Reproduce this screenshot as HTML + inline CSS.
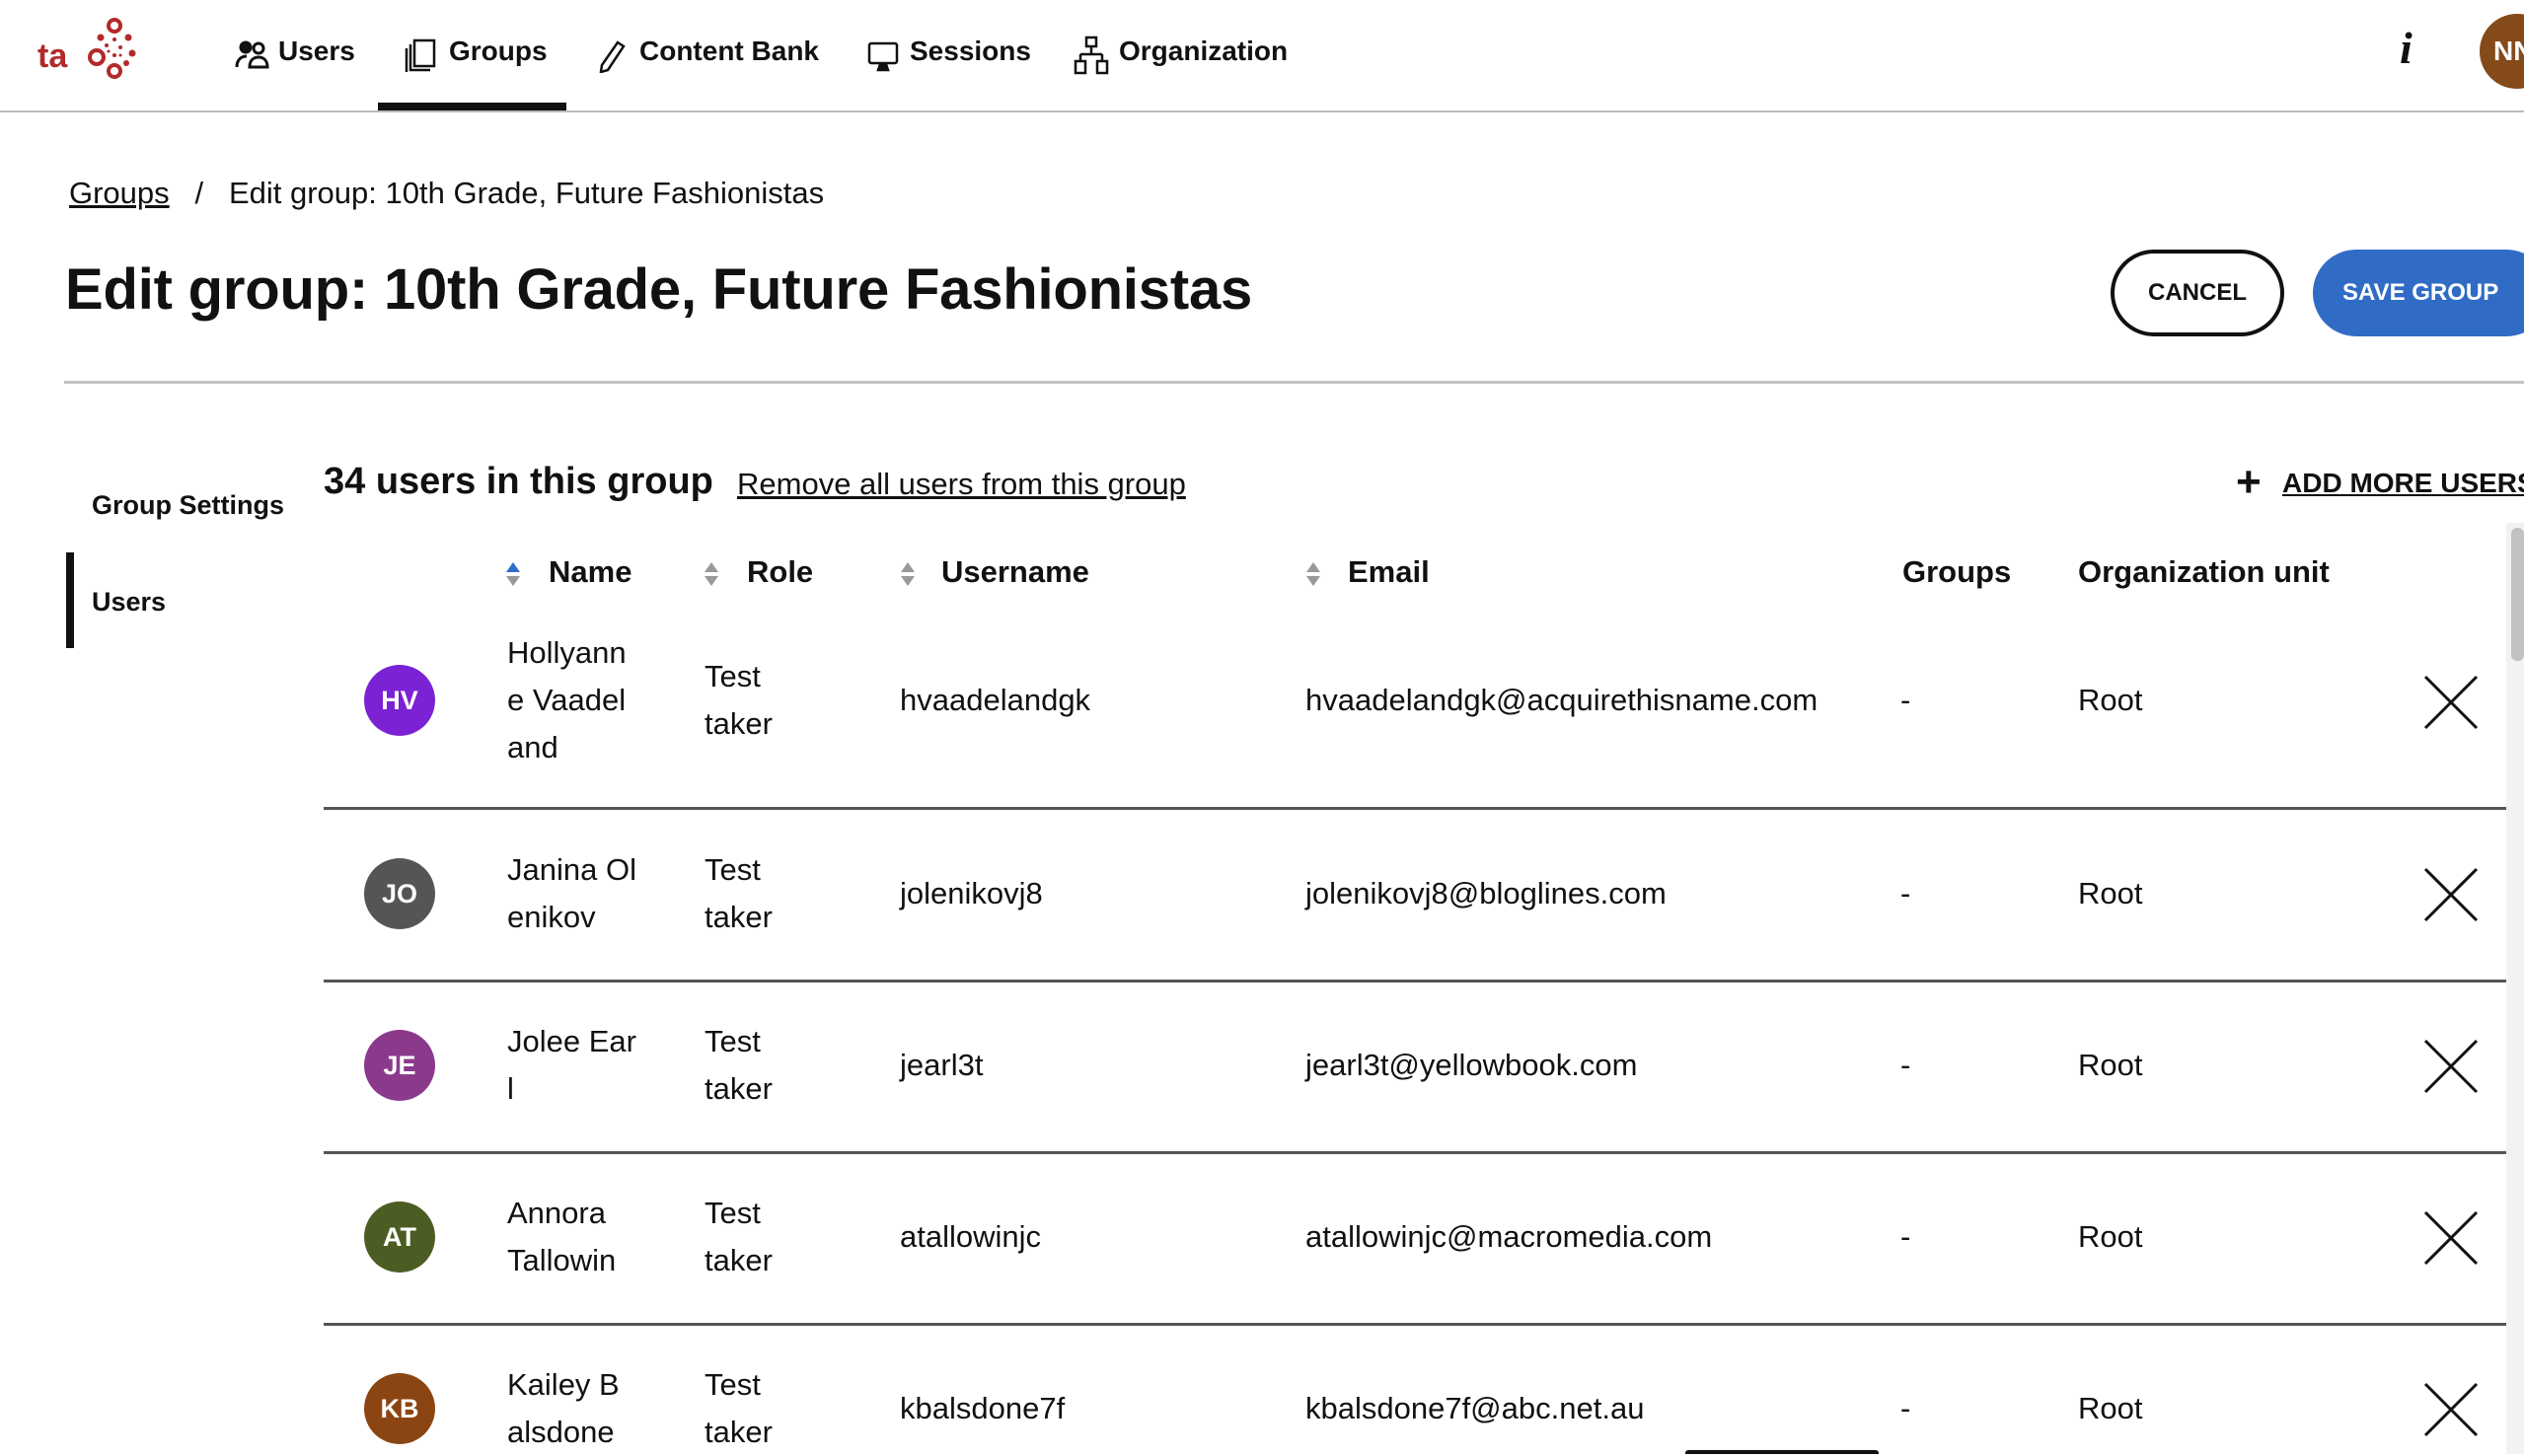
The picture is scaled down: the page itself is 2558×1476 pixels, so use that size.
<!DOCTYPE html>
<html><head><meta charset="utf-8"><style>
*{margin:0;padding:0;box-sizing:border-box}
body{width:2558px;height:1474px;overflow:hidden;background:#fff;font-family:"Liberation Sans",sans-serif;color:#111;position:relative}
.a{position:absolute;white-space:nowrap}
.nav{font-size:28px;font-weight:bold;top:36px}
.th{font-size:31px;font-weight:bold;top:562px}
.cell{font-size:31px;line-height:48px}
.av{position:absolute;width:72px;height:72px;border-radius:50%;color:#fff;font-weight:bold;font-size:27px;text-align:center;line-height:72px;left:369px}
.hr{position:absolute;left:328px;width:2212px;height:3px;background:#555}
.arr{position:absolute;width:14px}
.arr:before,.arr:after{content:"";position:absolute;left:0;border-left:7px solid transparent;border-right:7px solid transparent}
.arr:before{top:0;border-bottom:10px solid #999}
.arr:after{top:14px;border-top:10px solid #999}
.arr.up:before{border-bottom-color:#306cc5}
</style></head><body>
<!-- logo -->
<svg class="a" style="left:36px;top:16px" width="106" height="66" viewBox="0 0 106 66">
<text x="2" y="52" font-family="Liberation Sans" font-weight="bold" font-size="34" fill="#b22a2a">ta</text>
<g fill="none" stroke="#b22a2a" stroke-width="4"><circle cx="80" cy="10" r="6"/><circle cx="80" cy="56" r="6"/><circle cx="62" cy="42" r="7"/></g>
<g fill="#b22a2a"><circle cx="66" cy="22" r="3.5"/><circle cx="94" cy="22" r="3.5"/><circle cx="98" cy="38" r="3.5"/><circle cx="92" cy="48" r="3"/><circle cx="72" cy="30" r="2"/><circle cx="80" cy="24" r="2"/><circle cx="86" cy="32" r="2"/><circle cx="80" cy="40" r="2"/><circle cx="74" cy="36" r="1.5"/><circle cx="86" cy="40" r="1.5"/></g></svg>
<!-- nav -->
<div class="a nav" style="left:282px">Users</div>
<svg class="a" style="left:238px;top:40px" width="36" height="32" viewBox="0 0 36 32" fill="none" stroke="#111" stroke-width="3"><circle cx="11" cy="8" r="5" fill="#111"/><circle cx="24" cy="9" r="5"/><path d="M2 28c0-8 5-11 10-11M15 28c0-7 4-10 9-10s9 3 9 10z" /></svg>
<div class="a nav" style="left:455px">Groups</div>
<svg class="a" style="left:410px;top:38px" width="34" height="36" viewBox="0 0 34 36" fill="none" stroke="#111" stroke-width="2.5"><rect x="10" y="3" width="20" height="26"/><path d="M6 7v26h20M2 11v24"/></svg>
<div class="a nav" style="left:648px">Content Bank</div>
<svg class="a" style="left:604px;top:40px" width="32" height="34" viewBox="0 0 32 34" fill="none" stroke="#111" stroke-width="2.5"><path d="M22 3l6 4-16 24-7 2 1-7z"/></svg>
<div class="a nav" style="left:922px">Sessions</div>
<svg class="a" style="left:878px;top:40px" width="34" height="34" viewBox="0 0 34 34" fill="none" stroke="#111" stroke-width="2.5"><rect x="3" y="4" width="28" height="20" rx="2"/><path d="M14 25l-2 6h10l-2-6" fill="#111"/></svg>
<div class="a nav" style="left:1134px">Organization</div>
<svg class="a" style="left:1088px;top:36px" width="36" height="40" viewBox="0 0 36 40" fill="none" stroke="#111" stroke-width="2.5"><rect x="13" y="2" width="10" height="9"/><path d="M18 11v8M7 19h22M7 19v7M29 19v7"/><rect x="2" y="26" width="10" height="12"/><rect x="24" y="26" width="10" height="12"/></svg>
<div class="a" style="left:383px;top:104px;width:191px;height:9px;background:#111"></div>
<div class="a" style="left:0;top:112px;width:2558px;height:2px;background:#bbb"></div>
<div class="a" style="left:2432px;top:22px;font-family:'Liberation Serif',serif;font-style:italic;font-weight:bold;font-size:46px">i</div>
<div class="a" style="left:2513px;top:14px;width:76px;height:76px;border-radius:50%;background:#844a1a;color:#fff;font-weight:bold;font-size:28px;line-height:76px;padding-left:14px">NN</div>
<!-- breadcrumb -->
<div class="a" style="left:70px;top:178px;font-size:31px"><span style="text-decoration:underline">Groups</span>&nbsp;&nbsp;&nbsp;/&nbsp;&nbsp;&nbsp;Edit group: 10th Grade, Future Fashionistas</div>
<div class="a" style="left:66px;top:260px;font-size:58px;font-weight:bold;letter-spacing:-0.2px">Edit group: 10th Grade, Future Fashionistas</div>
<div class="a" style="left:2139px;top:253px;width:176px;height:88px;border:4px solid #111;border-radius:44px;text-align:center;line-height:80px;font-size:24px;font-weight:bold">CANCEL</div>
<div class="a" style="left:2344px;top:253px;width:240px;height:88px;background:#306cc5;border-radius:44px;color:#fff;line-height:88px;font-size:24px;font-weight:bold;padding-left:30px">SAVE GROUP</div>
<div class="a" style="left:65px;top:386px;width:2493px;height:3px;background:#c4c4c4"></div>
<!-- left nav -->
<div class="a" style="left:93px;top:497px;font-size:27px;font-weight:bold">Group Settings</div>
<div class="a" style="left:67px;top:560px;width:8px;height:97px;background:#111"></div>
<div class="a" style="left:93px;top:595px;font-size:27px;font-weight:bold">Users</div>
<!-- section head -->
<div class="a" style="left:328px;top:467px;font-size:38px;font-weight:bold">34 users in this group</div>
<div class="a" style="left:747px;top:473px;font-size:31px;text-decoration:underline">Remove all users from this group</div>
<div class="a" style="left:2266px;top:464px;font-size:44px;font-weight:bold">+</div>
<div class="a" style="left:2313px;top:474px;font-size:28px;font-weight:bold;text-decoration:underline">ADD MORE USERS</div>
<div class="a" style="left:2540px;top:530px;width:18px;height:944px;background:#f2f2f2"></div>
<div class="a" style="left:2545px;top:535px;width:13px;height:135px;background:#c2c2c2;border-radius:6px"></div>
<!-- table header -->
<div class="arr up" style="left:513px;top:570px"></div><div class="a th" style="left:556px">Name</div>
<div class="arr" style="left:714px;top:570px"></div><div class="a th" style="left:757px">Role</div>
<div class="arr" style="left:913px;top:570px"></div><div class="a th" style="left:954px">Username</div>
<div class="arr" style="left:1324px;top:570px"></div><div class="a th" style="left:1366px">Email</div>
<div class="a th" style="left:1928px">Groups</div>
<div class="a th" style="left:2106px">Organization unit</div>
<!-- rows -->
<div class="av" style="top:674px;background:#7b22d4">HV</div>
<div class="a cell" style="left:514px;top:638px">Hollyann<br>e Vaadel<br>and</div>
<div class="a cell" style="left:714px;top:662px">Test<br>taker</div>
<div class="a cell" style="left:912px;top:686px">hvaadelandgk</div>
<div class="a cell" style="left:1323px;top:686px">hvaadelandgk@acquirethisname.com</div>
<div class="a cell" style="left:1926px;top:686px">-</div>
<div class="a cell" style="left:2106px;top:686px">Root</div>
<div class="hr" style="top:818px"></div>

<div class="av" style="top:870px;background:#555">JO</div>
<div class="a cell" style="left:514px;top:858px">Janina Ol<br>enikov</div>
<div class="a cell" style="left:714px;top:858px">Test<br>taker</div>
<div class="a cell" style="left:912px;top:882px">jolenikovj8</div>
<div class="a cell" style="left:1323px;top:882px">jolenikovj8@bloglines.com</div>
<div class="a cell" style="left:1926px;top:882px">-</div>
<div class="a cell" style="left:2106px;top:882px">Root</div>
<div class="hr" style="top:993px"></div>

<div class="av" style="top:1044px;background:#8b3a8b">JE</div>
<div class="a cell" style="left:514px;top:1032px">Jolee Ear<br>l</div>
<div class="a cell" style="left:714px;top:1032px">Test<br>taker</div>
<div class="a cell" style="left:912px;top:1056px">jearl3t</div>
<div class="a cell" style="left:1323px;top:1056px">jearl3t@yellowbook.com</div>
<div class="a cell" style="left:1926px;top:1056px">-</div>
<div class="a cell" style="left:2106px;top:1056px">Root</div>
<div class="hr" style="top:1167px"></div>

<div class="av" style="top:1218px;background:#4b5d23">AT</div>
<div class="a cell" style="left:514px;top:1206px">Annora<br>Tallowin</div>
<div class="a cell" style="left:714px;top:1206px">Test<br>taker</div>
<div class="a cell" style="left:912px;top:1230px">atallowinjc</div>
<div class="a cell" style="left:1323px;top:1230px">atallowinjc@macromedia.com</div>
<div class="a cell" style="left:1926px;top:1230px">-</div>
<div class="a cell" style="left:2106px;top:1230px">Root</div>
<div class="hr" style="top:1341px"></div>

<div class="av" style="top:1392px;background:#8b4513">KB</div>
<div class="a cell" style="left:514px;top:1380px">Kailey B<br>alsdone</div>
<div class="a cell" style="left:714px;top:1380px">Test<br>taker</div>
<div class="a cell" style="left:912px;top:1404px">kbalsdone7f</div>
<div class="a cell" style="left:1323px;top:1404px">kbalsdone7f@abc.net.au</div>
<div class="a cell" style="left:1926px;top:1404px">-</div>
<div class="a cell" style="left:2106px;top:1404px">Root</div>

<svg class="a" style="left:2455px;top:683px" width="58" height="58" viewBox="0 0 58 58" stroke="#111" stroke-width="3"><path d="M3 3L55 55M55 3L3 55"/></svg>
<svg class="a" style="left:2455px;top:878px" width="58" height="58" viewBox="0 0 58 58" stroke="#111" stroke-width="3"><path d="M3 3L55 55M55 3L3 55"/></svg>
<svg class="a" style="left:2455px;top:1052px" width="58" height="58" viewBox="0 0 58 58" stroke="#111" stroke-width="3"><path d="M3 3L55 55M55 3L3 55"/></svg>
<svg class="a" style="left:2455px;top:1226px" width="58" height="58" viewBox="0 0 58 58" stroke="#111" stroke-width="3"><path d="M3 3L55 55M55 3L3 55"/></svg>
<svg class="a" style="left:2455px;top:1400px" width="58" height="58" viewBox="0 0 58 58" stroke="#111" stroke-width="3"><path d="M3 3L55 55M55 3L3 55"/></svg>
<div class="a" style="left:1708px;top:1470px;width:196px;height:4px;background:#111;border-radius:3px 3px 0 0"></div>
</body></html>
